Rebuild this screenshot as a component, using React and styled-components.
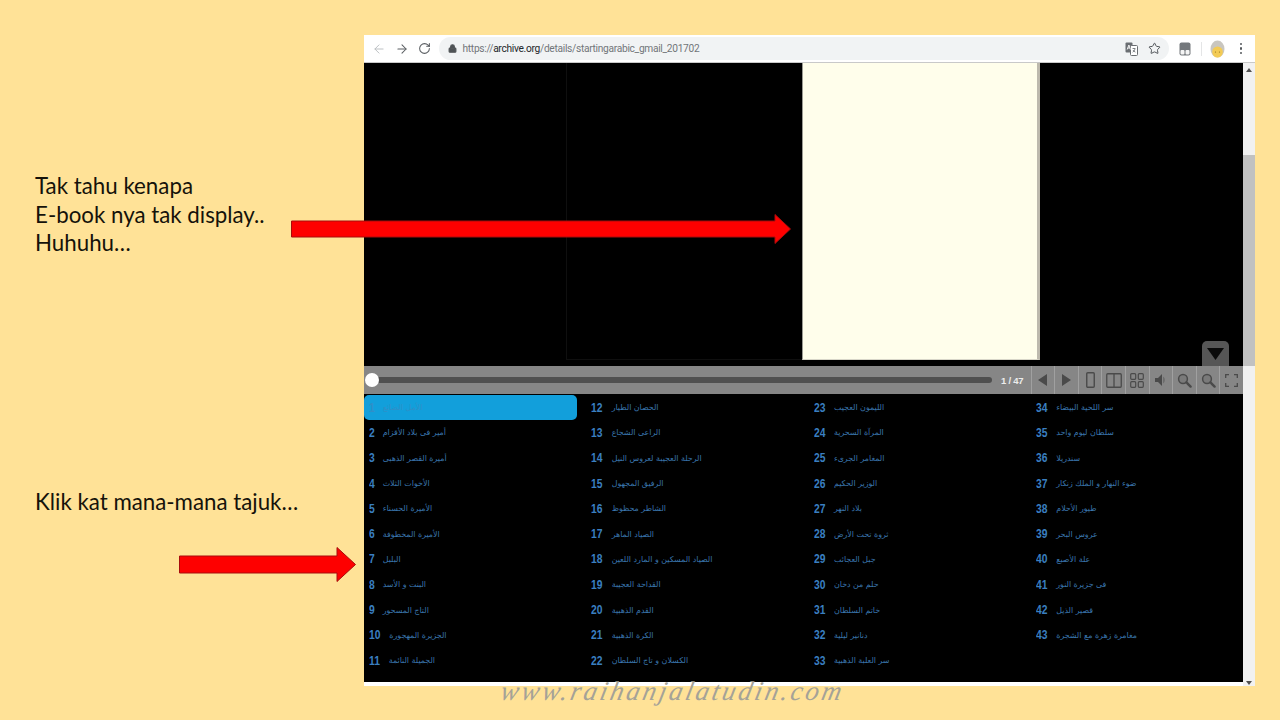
import React from 'react';
import styled, { createGlobalStyle } from 'styled-components';
import { ArrowLeft, ArrowRight, RotateCw, Lock, Star } from 'lucide-react';

const GlobalStyle = createGlobalStyle`
  html, body {
    margin: 0;
    padding: 0;
    background: #ffe297;
  }
`;

const Slide = styled.div`
  position: relative;
  width: 1280px;
  height: 720px;
  overflow: hidden;
  display: flex;
  background: #ffe297;
`;

const Notes = styled.div`
  width: 364px;
  flex: none;
  box-sizing: border-box;
  padding: 172px 0 0 35px;
  display: flex;
  flex-direction: column;
  gap: 230px;
`;

const Note = styled.div`
  font-family: "Lato", "Open Sans", sans-serif;
  font-size: 22.3px;
  line-height: 28.7px;
  color: #15120a;
`;

const BrowserWindow = styled.div`
  width: 891px;
  height: 651px;
  margin-top: 35px;
  background: #fff;
  display: flex;
  flex-direction: column;
`;

const Toolbar = styled.div`
  height: 28px;
  flex: none;
  box-sizing: border-box;
  display: flex;
  align-items: center;
  border-bottom: 1px solid #c9c9c9;
  color: #5f6368;
`;

const NavButton = styled.div`
  width: 22.5px;
  display: flex;
  justify-content: center;
  color: ${(props) => (props.$off ? '#b8bcc0' : '#5a5e62')};
  &:first-child {
    margin-left: 4px;
  }
`;

const Omnibox = styled.div`
  width: 730px;
  height: 23px;
  margin-left: 3px;
  padding: 0 8px 0 9px;
  box-sizing: border-box;
  display: flex;
  align-items: center;
  border-radius: 12px;
  background: #f1f3f4;
  color: #4f5356;
`;

const Url = styled.div`
  flex: 1;
  margin-left: 6px;
  font-family: "Roboto", "Liberation Sans", sans-serif;
  font-size: 10.2px;
  letter-spacing: -0.3px;
  color: #72767a;
  white-space: nowrap;
  b {
    font-weight: 400;
    color: #24272a;
  }
`;

const OmniIcons = styled.div`
  display: flex;
  align-items: center;
  gap: 10px;
`;

const ToolIcons = styled.div`
  flex: 1;
  display: flex;
  align-items: center;
  padding-left: 10px;
`;

const ToolDivider = styled.div`
  width: 1px;
  height: 14px;
  margin: 0 8px 0 10px;
  background: #e4e5e6;
`;

const Kebab = styled.div`
  margin-left: 15px;
  display: flex;
  flex-direction: column;
  gap: 2px;
  i {
    display: block;
    width: 2.5px;
    height: 2.5px;
    border-radius: 50%;
    background: #54585c;
  }
`;

const PageArea = styled.div`
  flex: 1;
  display: flex;
  min-height: 0;
`;

const Reader = styled.div`
  width: 879px;
  display: flex;
  flex-direction: column;
`;

const Viewer = styled.div`
  position: relative;
  height: 303px;
  flex: none;
  box-sizing: border-box;
  padding-right: 1px;
  background: #000;
  display: flex;
  justify-content: center;
`;

const Page = styled.div`
  width: ${(props) => (props.$blank ? '236px' : '238px')};
  height: 297px;
  box-sizing: border-box;
  ${(props) =>
    props.$blank
      ? `
    background: #000;
    border: 1px solid #0f0f0f;
    border-top: 0;
    border-right: 0;
  `
      : `
    background: #fffeeb;
    border-left: 1px solid #9a9a92;
    border-right: 3px solid #bdb9ad;
    border-bottom: 1px solid #d8d6c8;
  `}
`;

const ListToggle = styled.div`
  position: absolute;
  right: 14px;
  bottom: 0;
  width: 27px;
  height: 25px;
  display: flex;
  justify-content: center;
  align-items: center;
  border-radius: 5px 5px 0 0;
  background: #565656;
`;

const Controls = styled.div`
  height: 28px;
  flex: none;
  display: flex;
  align-items: stretch;
  background: #868686;
`;

const SliderWrap = styled.div`
  position: relative;
  width: 628px;
  margin-left: 2px;
  display: flex;
  align-items: center;
`;

const SliderTrack = styled.div`
  width: 620px;
  height: 6px;
  margin-left: 6px;
  border-radius: 3px;
  background: #4f4f4f;
`;

const SliderThumb = styled.div`
  position: absolute;
  left: -1px;
  top: 7px;
  width: 14px;
  height: 14px;
  border-radius: 50%;
  background: #fff;
`;

const PageCount = styled.div`
  width: 37px;
  display: flex;
  align-items: center;
  justify-content: center;
  font-family: "Liberation Sans", sans-serif;
  font-size: 9.5px;
  font-weight: 700;
  letter-spacing: -0.2px;
  color: #ececec;
  white-space: nowrap;
`;

const CtrlButton = styled.div`
  width: 23.6px;
  flex: none;
  box-sizing: border-box;
  display: flex;
  align-items: center;
  justify-content: center;
  border-left: 1px solid #a0a0a0;
  color: #4a4a4a;
`;

const ListGrid = styled.div`
  height: 288px;
  flex: none;
  box-sizing: border-box;
  padding-top: 1px;
  background: #000;
  display: grid;
  grid-auto-flow: column;
  grid-template-rows: repeat(11, 25.3px);
  grid-template-columns: repeat(4, 222.3px);
`;

const Entry = styled.div`
  display: flex;
  align-items: center;
  gap: 7px;
  padding-left: 5px;
  margin-right: ${(props) => (props.$active ? '9px' : '0')};
  border-radius: 5px;
  background: ${(props) => (props.$active ? '#129fdb' : 'transparent')};
  color: ${(props) => (props.$active ? '#2f8fc8' : '#3a7fc0')};
`;

const EntryNumber = styled.span`
  font-family: "Liberation Sans", sans-serif;
  font-size: 12px;
  font-weight: 700;
  transform: scaleX(0.86);
  transform-origin: left center;
`;

const EntryTitle = styled.span`
  font-family: "DejaVu Sans", sans-serif;
  font-size: 7.9px;
  color: ${(props) => (props.$active ? '#2f8fc8' : '#3a76ae')};
  direction: rtl;
  white-space: nowrap;
`;

const Scrollbar = styled.div`
  position: relative;
  width: 12px;
  background: #f1f1f1;
`;

const ScrollThumb = styled.div`
  position: absolute;
  left: 0;
  top: 92px;
  width: 100%;
  height: 211px;
  background: #c1c1c1;
`;

const ScrollArrow = styled.div`
  position: absolute;
  left: 3px;
  ${(props) => (props.$down ? 'bottom: 1px;' : 'top: 5px;')}
  width: 0;
  height: 0;
  border-left: 3px solid transparent;
  border-right: 3px solid transparent;
  ${(props) => (props.$down ? 'border-top: 4px solid #505050;' : 'border-bottom: 4px solid #505050;')}
`;

const Arrow = styled.svg`
  position: absolute;
  left: ${(props) => props.$x}px;
  top: ${(props) => props.$y}px;
`;

const Watermark = styled.div`
  position: absolute;
  left: 501px;
  top: 676px;
  font-family: "Liberation Serif", serif;
  font-style: italic;
  font-size: 27px;
  letter-spacing: 2.75px;
  color: #a5a297;
  white-space: nowrap;
  transform: skewX(-12deg);
`;

const titles = [
  'الأمل الضائع',
  'أمير فى بلاد الأقزام',
  'أميرة القصر الذهبى',
  'الأخوات الثلاث',
  'الأميرة الحسناء',
  'الأميرة المخطوفة',
  'البلبل',
  'البنت و الأسد',
  'التاج المسحور',
  'الجزيرة المهجورة',
  'الجميلة النائمة',
  'الحصان الطيار',
  'الراعى الشجاع',
  'الرحلة العجيبة لعروس النيل',
  'الرفيق المجهول',
  'الشاطر محظوظ',
  'الصياد الماهر',
  'الصياد المسكين و المارد اللعين',
  'القداحة العجيبة',
  'القدم الذهبية',
  'الكرة الذهبية',
  'الكسلان و تاج السلطان',
  'الليمون العجيب',
  'المرآة السحرية',
  'المغامر الجرىء',
  'الوزير الحكيم',
  'بلاد النهر',
  'ثروة تحت الأرض',
  'جبل العجائب',
  'حلم من دخان',
  'خاتم السلطان',
  'دنانير ليلية',
  'سر العلبة الذهبية',
  'سر اللحية البيضاء',
  'سلطان ليوم واحد',
  'سندريلا',
  'ضوء النهار و الملك زنكار',
  'طيور الأحلام',
  'عروس البحر',
  'علة الأصبع',
  'فى جزيرة النور',
  'قصير الذيل',
  'مغامرة زهرة مع الشجرة',
];

const TranslateIcon = () => (
  <svg width="13" height="14" viewBox="0 0 13 14">
    <rect x="0.5" y="0.5" width="7" height="10" rx="1" fill="#6a6e72" />
    <rect x="5.5" y="3.5" width="7" height="10" rx="1" fill="#fff" stroke="#6a6e72" />
    <path d="M7.5 6.5h3M9 6v1M10 7c-.3 1.5-1.2 2.6-2.4 3.2M8 8c.5 1 1.2 1.6 2.4 2.1" fill="none" stroke="#6a6e72" strokeWidth="0.8" />
    <path d="M2.2 7.5 3.9 3l1.5 4.5M2.8 6h2" fill="none" stroke="#fff" strokeWidth="0.9" />
  </svg>
);

const ExtensionIcon = () => (
  <svg width="12" height="14" viewBox="0 0 12 14">
    <rect x="0.5" y="0.5" width="11" height="13" rx="2" fill="#74787c" />
    <rect x="1.5" y="8" width="4" height="4.5" rx="1" fill="#f5f5f5" />
    <rect x="6.5" y="8" width="4" height="4.5" rx="1" fill="#f5f5f5" />
  </svg>
);

const Avatar = () => (
  <svg width="15" height="18" viewBox="0 0 15 18">
    <ellipse cx="7.5" cy="9" rx="7" ry="8.5" fill="#c9c6bf" />
    <ellipse cx="7.5" cy="12" rx="5.3" ry="5.5" fill="#f3cb55" />
    <circle cx="5.5" cy="12" r="0.6" fill="#8a6c1f" />
    <circle cx="9.5" cy="12" r="0.6" fill="#8a6c1f" />
  </svg>
);

const Triangle = ({ flip }) => (
  <svg width="9" height="12" viewBox="0 0 9 12">
    <path d={flip ? 'M9 0 0 6l9 6z' : 'M0 0l9 6-9 6z'} fill="currentColor" />
  </svg>
);

const SinglePage = () => (
  <svg width="9" height="16" viewBox="0 0 9 16">
    <rect x="0.75" y="0.75" width="7.5" height="14.5" rx="1" fill="none" stroke="currentColor" strokeWidth="1.4" />
  </svg>
);

const DoublePage = () => (
  <svg width="16" height="15" viewBox="0 0 16 15">
    <rect x="0.75" y="0.75" width="14.5" height="13.5" rx="1" fill="none" stroke="currentColor" strokeWidth="1.3" />
    <path d="M8 1v13" stroke="currentColor" strokeWidth="1.3" />
  </svg>
);

const Thumbs = () => (
  <svg width="14" height="15" viewBox="0 0 14 15">
    <rect x="0.7" y="0.7" width="5" height="5.6" rx="1" fill="none" stroke="currentColor" strokeWidth="1.2" />
    <rect x="8.3" y="0.7" width="5" height="5.6" rx="1" fill="none" stroke="currentColor" strokeWidth="1.2" />
    <rect x="0.7" y="8.7" width="5" height="5.6" rx="1" fill="none" stroke="currentColor" strokeWidth="1.2" />
    <rect x="8.3" y="8.7" width="5" height="5.6" rx="1" fill="none" stroke="currentColor" strokeWidth="1.2" />
  </svg>
);

const Sound = () => (
  <svg width="11" height="12" viewBox="0 0 11 12">
    <path d="M0 4h3l4-4v12L3 8H0z" fill="currentColor" />
    <path d="M8 2.5c2.5 1.5 2.5 5.5 0 7z" fill="#6c6c6c" />
  </svg>
);

const Magnifier = () => (
  <svg width="15" height="15" viewBox="0 0 15 15">
    <circle cx="6" cy="6" r="4.4" fill="#7a7a7a" stroke="currentColor" strokeWidth="1.5" />
    <path d="M9.4 9.4 13.6 13.6" stroke="currentColor" strokeWidth="2.4" strokeLinecap="round" />
  </svg>
);

const Fullscreen = () => (
  <svg width="13" height="13" viewBox="0 0 13 13">
    <path d="M.7 4V.7H4M9 .7h3.3V4M12.3 9v3.3H9M4 12.3H.7V9" fill="none" stroke="currentColor" strokeWidth="1.3" />
  </svg>
);

const BigArrow = ({ x, y, width, height, shaftTop, shaftBottom, headAt }) => (
  <Arrow $x={x} $y={y} width={width} height={height} viewBox={`0 0 ${width} ${height}`}>
    <path
      d={`M.5 ${shaftTop}H${headAt}V.5L${width - 0.5} ${height / 2} ${headAt} ${height - 0.5}V${shaftBottom}H.5Z`}
      fill="#fe0000"
      stroke="#a80c0c"
      strokeWidth="1"
    />
  </Arrow>
);

const App = () => {
  return (
    <Slide>
      <GlobalStyle />
      <Notes>
        <Note>
          Tak tahu kenapa
          <br />
          E-book nya tak display..
          <br />
          Huhuhu…
        </Note>
        <Note>Klik kat mana-mana tajuk…</Note>
      </Notes>
      <BrowserWindow>
        <Toolbar>
          <NavButton $off>
            <ArrowLeft size={14} strokeWidth={1.6} />
          </NavButton>
          <NavButton>
            <ArrowRight size={14} strokeWidth={1.8} />
          </NavButton>
          <NavButton>
            <RotateCw size={13} strokeWidth={1.9} />
          </NavButton>
          <Omnibox>
            <Lock size={9} strokeWidth={3} fill="currentColor" />
            <Url>
              https://<b>archive.org</b>/details/startingarabic_gmail_201702
            </Url>
            <OmniIcons>
              <TranslateIcon />
              <Star size={13} strokeWidth={1.8} color="#4e5256" />
            </OmniIcons>
          </Omnibox>
          <ToolIcons>
            <ExtensionIcon />
            <ToolDivider />
            <Avatar />
            <Kebab>
              <i />
              <i />
              <i />
            </Kebab>
          </ToolIcons>
        </Toolbar>
        <PageArea>
          <Reader>
            <Viewer>
              <Page $blank />
              <Page />
              <ListToggle>
                <svg width="17" height="12" viewBox="0 0 17 12">
                  <path d="M0 0h17L8.5 12z" fill="#0a0a0a" />
                </svg>
              </ListToggle>
            </Viewer>
            <Controls>
              <SliderWrap>
                <SliderTrack />
                <SliderThumb />
              </SliderWrap>
              <PageCount>1 / 47</PageCount>
              <CtrlButton><Triangle flip /></CtrlButton>
              <CtrlButton><Triangle /></CtrlButton>
              <CtrlButton><SinglePage /></CtrlButton>
              <CtrlButton><DoublePage /></CtrlButton>
              <CtrlButton><Thumbs /></CtrlButton>
              <CtrlButton><Sound /></CtrlButton>
              <CtrlButton><Magnifier /></CtrlButton>
              <CtrlButton><Magnifier /></CtrlButton>
              <CtrlButton><Fullscreen /></CtrlButton>
            </Controls>
            <ListGrid>
              {titles.map((title, i) => (
                <Entry key={i} $active={i === 0}>
                  <EntryNumber>{i + 1}</EntryNumber>
                  <EntryTitle $active={i === 0}>{title}</EntryTitle>
                </Entry>
              ))}
            </ListGrid>
          </Reader>
          <Scrollbar>
            <ScrollThumb />
            <ScrollArrow />
            <ScrollArrow $down />
          </Scrollbar>
        </PageArea>
      </BrowserWindow>
      <BigArrow x={291} y={214} width={500} height={30} shaftTop={7} shaftBottom={23} headAt={484} />
      <BigArrow x={179} y={547} width={177} height={35} shaftTop={9} shaftBottom={26} headAt={158} />
      <Watermark>www.raihanjalatudin.com</Watermark>
    </Slide>
  );
};

export default App;
